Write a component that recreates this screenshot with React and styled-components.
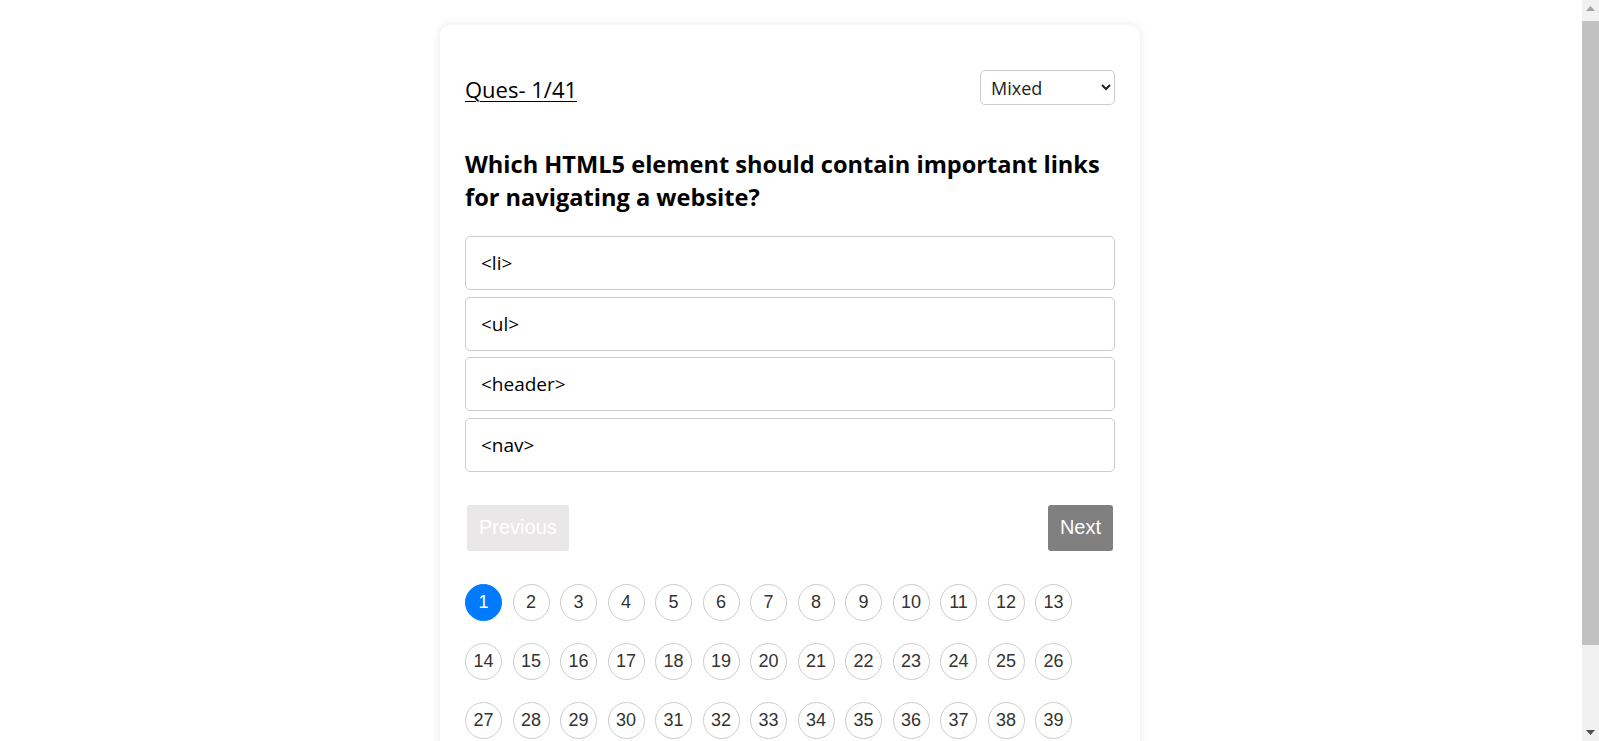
import { useState } from "react";
import styled, { createGlobalStyle } from "styled-components";

const GlobalStyle = createGlobalStyle`
  body {
    margin: 0;
    background: #fff;
    font-family: "Open Sans", "Noto Sans", sans-serif;
  }
`;

// page area leaves room for the window scrollbar on the right
const Page = styled.div`
  display: flex;
  justify-content: center;
  padding: 25px 19px 25px 0;
`;

const Scrollbar = styled.div`
  position: fixed;
  top: 0;
  right: 0;
  width: 17px;
  height: 100vh;
  background: #f1f1f1;
  display: flex;
  flex-direction: column;
  align-items: center;
`;

const ScrollArrow = styled.div`
  height: 17px;
  display: flex;
  align-items: center;
  justify-content: center;
  margin-top: ${(p) => (p.down ? "auto" : "0")};
`;

const ScrollThumb = styled.div`
  width: 17px;
  height: 624px;
  margin-top: 4px;
  background: #c1c1c1;
`;

const Card = styled.div`
  width: 700px;
  box-sizing: border-box;
  padding: 45px 25px 15px;
  background: #fff;
  border-radius: 10px;
  box-shadow: 0 0 10px rgba(0, 0, 0, 0.1);
`;

const Header = styled.div`
  display: flex;
  justify-content: space-between;
  align-items: center;
  height: 35px;
`;

const Counter = styled.span`
  font-size: 22px;
  color: #000;
  text-decoration: underline;
  text-underline-offset: 3px;
  text-decoration-thickness: 1px;
  padding-top: 2px;
`;

const Select = styled.select`
  width: 135px;
  height: 35px;
  padding: 0 6px;
  font-family: "Open Sans", sans-serif;
  font-size: 18px;
  color: #222;
  background: #fff;
  border: 1px solid #ccc;
  border-radius: 5px;
`;

const Question = styled.h2`
  margin: 43px 0 22px;
  font-size: 23.6px;
  line-height: 33px;
  font-weight: 700;
  color: #000;
`;

const Options = styled.div`
  display: flex;
  flex-direction: column;
  gap: 6.5px;
`;

const Option = styled.div`
  height: 54px;
  box-sizing: border-box;
  display: flex;
  align-items: center;
  padding: 0 15px;
  border: 1px solid #ccc;
  border-radius: 5px;
  font-size: 19px;
  color: #000;
  cursor: pointer;
`;

const Nav = styled.div`
  display: flex;
  justify-content: space-between;
  margin-top: 33px;
  padding: 0 2px;
`;

const NavButton = styled.button`
  height: 46px;
  padding: 0 12px;
  border: none;
  border-radius: 3px;
  font-family: "Liberation Sans", Arial, sans-serif;
  font-size: 20px;
  color: #fff;
  background: ${(p) => (p.disabled ? "#e9e7e8" : "#808080")};
`;

const Grid = styled.div`
  display: flex;
  flex-wrap: wrap;
  column-gap: 10.5px;
  row-gap: 22px;
  margin-top: 33px;
`;

const Bubble = styled.button`
  width: 37px;
  height: 37px;
  padding: 0;
  box-sizing: border-box;
  border-radius: 50%;
  border: 1px solid ${(p) => (p.active ? "#007bff" : "#ccc")};
  background: ${(p) => (p.active ? "#007bff" : "#fff")};
  color: ${(p) => (p.active ? "#fff" : "#333")};
  font-family: "Liberation Sans", Arial, sans-serif;
  font-size: 18px;
`;

const options = ["<li>", "<ul>", "<header>", "<nav>"];
const total = 41;

export default function App() {
  const [current, setCurrent] = useState(1);
  const [mode, setMode] = useState("Mixed");

  return (
    <Page>
      <GlobalStyle />
      <Card>
        <Header>
          <Counter>Ques- {current}/{total}</Counter>
          <Select value={mode} onChange={(e) => setMode(e.target.value)}>
            <option>Mixed</option>
            <option>Easy</option>
            <option>Hard</option>
          </Select>
        </Header>
        <Question>
          Which HTML5 element should contain important links for navigating a
          website?
        </Question>
        <Options>
          {options.map((o) => (
            <Option key={o}>{o}</Option>
          ))}
        </Options>
        <Nav>
          <NavButton disabled={current === 1} onClick={() => setCurrent(current - 1)}>
            Previous
          </NavButton>
          <NavButton disabled={current === total} onClick={() => setCurrent(current + 1)}>
            Next
          </NavButton>
        </Nav>
        <Grid>
          {Array.from({ length: total }, (_, i) => i + 1).map((n) => (
            <Bubble key={n} active={n === current} onClick={() => setCurrent(n)}>
              {n}
            </Bubble>
          ))}
        </Grid>
      </Card>
      <Scrollbar>
        <ScrollArrow>
          <svg width="9" height="5" viewBox="0 0 9 5">
            <polygon points="0,5 4.5,0 9,5" fill="#a3a3a3" />
          </svg>
        </ScrollArrow>
        <ScrollThumb />
        <ScrollArrow down>
          <svg width="9" height="5" viewBox="0 0 9 5">
            <polygon points="0,0 9,0 4.5,5" fill="#505050" />
          </svg>
        </ScrollArrow>
      </Scrollbar>
    </Page>
  );
}
